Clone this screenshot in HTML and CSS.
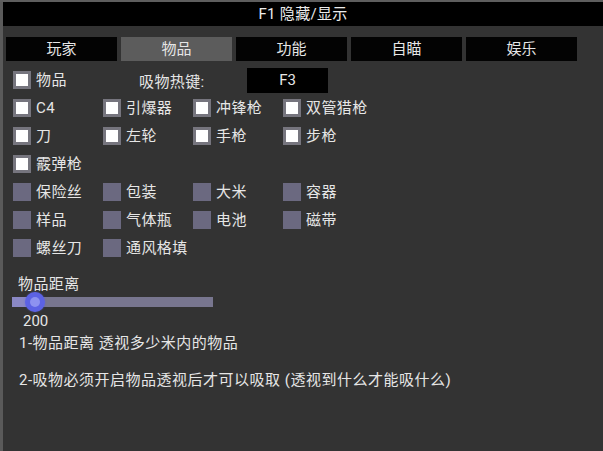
FILE: index.html
```html
<!DOCTYPE html>
<html lang="zh">
<head>
<meta charset="utf-8">
<title>物品</title>
<link rel="stylesheet" href="styles.css">
</head>
<body>
<div class="strip"></div>
<div class="panel">
  <div class="title">F1 隐藏/显示</div>
  <div class="tabs">
    <div class="tab">玩家</div>
    <div class="tab active">物品</div>
    <div class="tab">功能</div>
    <div class="tab">自瞄</div>
    <div class="tab">娱乐</div>
  </div>
  <div class="content">
    <div class="row first">
      <label class="item"><span class="box on"></span><span class="lbl">物品</span></label>
      <span class="hotkey-label">吸物热键:</span>
      <span class="hotkey">F3</span>
    </div>
    <div class="row">
      <label class="item"><span class="box on"></span><span class="lbl">C4</span></label>
      <label class="item"><span class="box on"></span><span class="lbl">引爆器</span></label>
      <label class="item"><span class="box on"></span><span class="lbl">冲锋枪</span></label>
      <label class="item"><span class="box on"></span><span class="lbl">双管猎枪</span></label>
    </div>
    <div class="row">
      <label class="item"><span class="box on"></span><span class="lbl">刀</span></label>
      <label class="item"><span class="box on"></span><span class="lbl">左轮</span></label>
      <label class="item"><span class="box on"></span><span class="lbl">手枪</span></label>
      <label class="item"><span class="box on"></span><span class="lbl">步枪</span></label>
    </div>
    <div class="row">
      <label class="item"><span class="box on"></span><span class="lbl">霰弹枪</span></label>
    </div>
    <div class="row">
      <label class="item"><span class="box"></span><span class="lbl">保险丝</span></label>
      <label class="item"><span class="box"></span><span class="lbl">包装</span></label>
      <label class="item"><span class="box"></span><span class="lbl">大米</span></label>
      <label class="item"><span class="box"></span><span class="lbl">容器</span></label>
    </div>
    <div class="row">
      <label class="item"><span class="box"></span><span class="lbl">样品</span></label>
      <label class="item"><span class="box"></span><span class="lbl">气体瓶</span></label>
      <label class="item"><span class="box"></span><span class="lbl">电池</span></label>
      <label class="item"><span class="box"></span><span class="lbl">磁带</span></label>
    </div>
    <div class="row">
      <label class="item"><span class="box"></span><span class="lbl">螺丝刀</span></label>
      <label class="item"><span class="box"></span><span class="lbl">通风格填</span></label>
    </div>
  </div>
  <div class="slider-block">
    <div class="slider-label">物品距离</div>
    <div class="slider">
      <div class="fill" style="width: 23px"></div>
      <div class="thumb" style="left: 13px"></div>
    </div>
    <div class="slider-value">200</div>
  </div>
  <div class="notes">
    <p class="note">1-物品距离 透视多少米内的物品</p>
    <p class="note">2-吸物必须开启物品透视后才可以吸取 (透视到什么才能吸什么)</p>
  </div>
</div>
</body>
</html>
```
FILE: styles.css
```css
* { box-sizing: border-box; }
html, body {
  margin: 0;
  padding: 0;
  background: #333333;
  font-family: "Roboto", "Noto Sans CJK SC", sans-serif;
  color: #e6e6e6;
  font-size: 15px;
}
.strip {
  height: 2px;
  background: #5e5e5e;
}
.panel {
  border-left: 3px solid #5a5a5a;
  min-height: 449px;
  background: #333333;
}
.title {
  height: 24px;
  background: #000;
  text-align: center;
  line-height: 24px;
  font-size: 15px;
  color: #ececec;
  letter-spacing: 0.3px;
}
.tabs {
  display: flex;
  gap: 4px;
  padding: 11px 0 0 3px;
}
.tab {
  width: 111px;
  height: 24px;
  background: #030303;
  text-align: center;
  line-height: 24px;
  color: #e6e6e6;
}
.tab.active {
  background: #5c5c5c;
}
.content {
  padding: 5px 0 0 10px;
}
.row {
  display: flex;
  align-items: center;
  height: 28px;
}
.item {
  width: 90px;
  display: flex;
  align-items: center;
  gap: 5px;
}
.box {
  width: 18px;
  height: 18px;
  background: #6b6980;
  flex: none;
}
.box.on {
  background: #fff;
  border: 3px solid #76757e;
}
.lbl {
  line-height: 20px;
  white-space: nowrap;
  letter-spacing: 0.4px;
}
.hotkey-label {
  margin-left: 36px;
  width: 108px;
  letter-spacing: 0.4px;
}
.hotkey {
  width: 81px;
  height: 25px;
  background: #000;
  text-align: center;
  line-height: 25px;
}
.slider-block {
  padding: 12px 0 0 9px;
}
.slider-label {
  padding-left: 6px;
  line-height: 20px;
  letter-spacing: 0.4px;
}
.slider {
  position: relative;
  width: 201px;
  height: 10px;
  margin-top: 3px;
  background: #78768f;
}
.fill {
  height: 10px;
  background: #8a88c4;
}
.thumb {
  position: absolute;
  top: -5px;
  width: 20px;
  height: 20px;
  border-radius: 50%;
  background: #5c62e4;
  box-shadow: 0 0 2px rgba(92, 98, 228, 0.6);
}
.thumb::after {
  content: "";
  position: absolute;
  left: 5px;
  top: 5px;
  width: 10px;
  height: 10px;
  border-radius: 50%;
  background: #8d92f0;
}
.slider-value {
  padding-left: 11px;
  margin-top: 4px;
  line-height: 20px;
}
.notes {
  padding-left: 16px;
}
.note {
  margin: 0;
  line-height: 20px;
  letter-spacing: 0.5px;
}
.note + .note {
  margin-top: 17px;
}
.notes .note:first-child {
  margin-top: 2px;
}
```
